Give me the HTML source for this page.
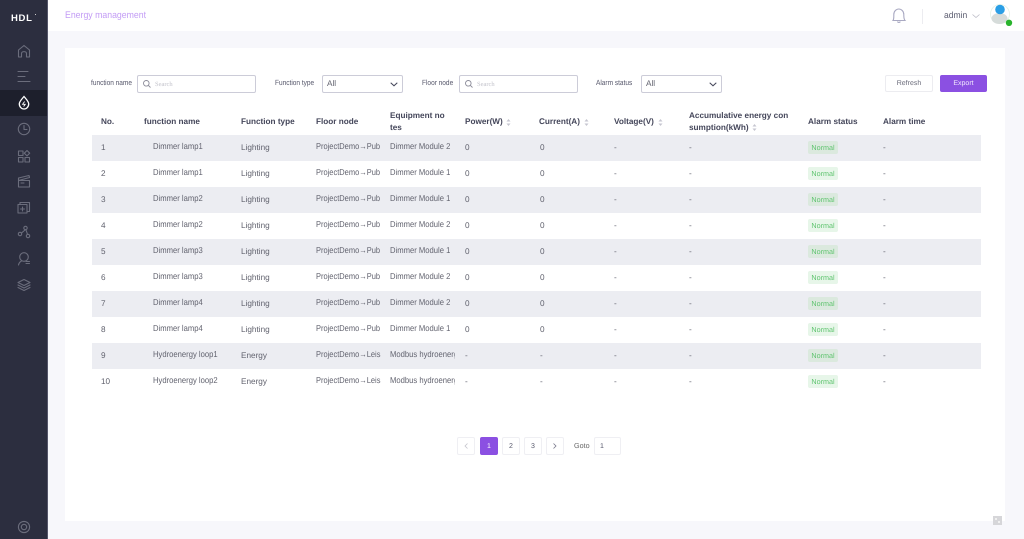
<!DOCTYPE html>
<html><head><meta charset="utf-8">
<style>
*{box-sizing:border-box}
html,body{margin:0;padding:0;width:1024px;height:539px;overflow:hidden;background:#f7f7fb;font-family:"Liberation Sans",sans-serif;color:#55566a;text-rendering:geometricPrecision}
div,span{position:absolute;white-space:nowrap}
#side{left:0;top:0;width:48px;height:539px;background:#2c2e3f;border-right:1px solid #55566a}
#top{left:48px;top:0;width:976px;height:31px;background:#fff}
#main{left:65px;top:48px;width:940px;height:473px;background:#fff}
.lab{font-size:7.5px;color:#55566a;line-height:10px;transform:scaleX(.87);transform-origin:left}
.inp{height:18px;background:#fff;border:1px solid #ccccd8;border-radius:2px}
.ph{font:6.5px "Liberation Serif",serif;color:#c4c4cc;top:5px}
.th{font-size:8.2px;font-weight:bold;color:#44465a;line-height:11.5px}
.row{left:92px;width:889px;height:26px}
.row.s{background:#ecedf2;height:25.5px}
.row span{font-size:8.2px;color:#62636f;line-height:10px}
.n{left:9px;top:8px}.row .f{left:61px;top:6px;font-size:8.5px;transform:scaleX(.9);transform-origin:left}.t{left:149px;top:8px}.row .p{left:224px;top:6px;font-size:8.5px;transform:scaleX(.88);transform-origin:left}
.row .e{left:298px;top:6px;width:72px;overflow:hidden;font-size:8.5px;transform:scaleX(.9);transform-origin:left}.w{left:373px;top:8px}.c{left:448px;top:8px}.v{left:522px;top:8px}.a{left:597px;top:8px}.z{left:791px;top:8px}
.row .b{left:716px;top:6px;width:30px;height:13px;line-height:13px;text-align:center;font-size:7.2px;color:#5fc46f;background:#e7f6e9;border-radius:2px}
.row.s .b{background:#dbe9de}
.pg{top:437px;width:18px;height:18px;border:1px solid #efeff3;background:#fff;border-radius:2px;text-align:center;font-size:7px;line-height:17px;color:#55566a}
svg{position:absolute;overflow:visible}
.ic{fill:none;stroke:#6b6d7c;stroke-width:1.1;stroke-linecap:round;stroke-linejoin:round}
</style></head><body>
<div id="side">
<div style="left:11px;top:13px;font-size:9.5px;font-weight:bold;color:#fff;letter-spacing:.7px;line-height:11px">HDL</div>
<div style="left:35px;top:14px;width:1px;height:1px;background:#ccc"></div>
<div style="left:0;top:90px;width:47px;height:26px;background:#1d1f2c"></div>
<svg width="47" height="539" style="left:0;top:0">
<g class="ic">
<path d="M18.5 57V50L24 45.5 29.5 50V57H26.5V53.5C26.5 51 21.5 51 21.5 53.5V57Z"/>
<path d="M18 71.5H28M18 76.5H25M18 81.5H30"/>
<circle cx="24" cy="129" r="5.7"/><path d="M24 125.5V129.5H27"/>
<rect x="18.5" y="151" width="4.5" height="4.5"/><path d="M27 150.5l2.7 2.7-2.7 2.7-2.7-2.7z"/><rect x="18.5" y="157.5" width="4.5" height="4.5"/><rect x="25" y="157.5" width="4.5" height="4.5"/>
<path d="M18.5 180.5H29.5V187H18.5ZM18.5 180.5V178L29 175.5 29.5 177.5 18.5 180.5M21 183H24"/>
<path d="M20 204V202.5H29.5V211.5H27M18 204.5H27V213H18ZM22.5 207V211M20.5 209H24.5"/>
<circle cx="25.5" cy="228" r="1.7"/><circle cx="20" cy="234" r="1.7"/><circle cx="28" cy="236" r="1.7"/><path d="M25 230L21.5 233M26 230L27.5 234.3"/>
<circle cx="24" cy="257" r="4.3"/><path d="M18.5 265C19 262.5 20.5 261.5 21.5 261"/><path d="M26 261.5H29.5M26 263.5H29.5"/>
<path d="M24 279.5L30 282.5 24 285.5 18 282.5ZM18 285L24 288 30 285M18 287.5L24 290.5 30 287.5"/>
<circle cx="24" cy="527" r="5.6"/><circle cx="24" cy="527" r="2.7"/>
</g>
<path d="M24 96.5C21.5 99.5 19.3 101.5 19.3 104C19.3 106.8 21.5 109 24 109C26.5 109 28.7 106.8 28.7 104C28.7 101.5 26.5 99.5 24 96.5Z" fill="none" stroke="#fff" stroke-width="1.3"/>
<path d="M24.6 101.5L22.6 104.3H25.2L23.6 106.5" fill="none" stroke="#fff" stroke-width=".9"/>
</svg>
</div>
<div id="top"></div>
<div style="left:65px;top:10px;font-size:9.6px;line-height:12px;color:#c39cf5;transform:scaleX(.91);transform-origin:left">Energy management</div>
<svg width="20" height="20" style="left:889px;top:6px" fill="none" stroke="#a9a9c2" stroke-width="1.1"><path d="M4 14.5C5 13 4.8 11 4.8 8.5C4.8 5.5 7 3 9.8 3C12.6 3 14.8 5.5 14.8 8.5C14.8 11 14.7 13 16 14.5ZM8.5 15.5C8.8 16.7 11 16.7 11.2 15.500"/></svg>
<div style="left:922px;top:9px;width:1px;height:15px;background:#ececf0"></div>
<div style="left:944px;top:10px;font-size:9px;line-height:11px;color:#5c5d70;transform:scaleX(.95);transform-origin:left">admin</div>
<svg width="8" height="5" style="left:972px;top:14px" fill="none" stroke="#bbbbc6" stroke-width=".8"><path d="M.5.5L4 3.500 7.500.5"/></svg>
<svg width="26" height="26" style="left:989px;top:4px"><circle cx="11" cy="10" r="9.500" fill="none" stroke="#e3f1e6" stroke-width=".8"/><ellipse cx="10.500" cy="14.500" rx="8" ry="5.500" fill="#d6dcda"/><circle cx="11" cy="5.500" r="4.800" fill="#2a9ee5"/><circle cx="20" cy="18.800" r="3.200" fill="#28b32c"/></svg>

<div id="main"></div>
<div class="lab" style="left:91px;top:78px">function name</div>
<div class="inp" style="left:137px;top:75px;width:119px"><svg width="8" height="8" style="left:5px;top:4px" fill="none" stroke="#8a8a98" stroke-width=".9"><circle cx="3.300" cy="3.300" r="2.800"/><path d="M5.400 5.400L7.500 7.500"/></svg><span class="ph" style="left:17px">Search</span></div>
<div class="lab" style="left:275px;top:78px">Function type</div>
<div class="inp" style="left:322px;top:75px;width:81px"><span style="left:4px;top:2px;font-size:8.200px;line-height:11px;color:#62636f">All</span><svg width="8" height="5" style="left:67px;top:6px" fill="none" stroke="#44465a" stroke-width="1"><path d="M.7.7L4 3.800 7.300.7"/></svg></div>
<div class="lab" style="left:422px;top:78px">Floor node</div>
<div class="inp" style="left:459px;top:75px;width:119px"><svg width="8" height="8" style="left:5px;top:4px" fill="none" stroke="#8a8a98" stroke-width=".9"><circle cx="3.300" cy="3.300" r="2.800"/><path d="M5.400 5.400L7.500 7.500"/></svg><span class="ph" style="left:17px">Search</span></div>
<div class="lab" style="left:596px;top:78px">Alarm status</div>
<div class="inp" style="left:641px;top:75px;width:81px"><span style="left:4px;top:2px;font-size:8.200px;line-height:11px;color:#62636f">All</span><svg width="8" height="5" style="left:67px;top:6px" fill="none" stroke="#44465a" stroke-width="1"><path d="M.7.7L4 3.800 7.300.7"/></svg></div>
<div style="left:885px;top:75px;width:48px;height:17px;border:1px solid #ececf0;border-radius:2px;background:#fff;text-align:center;font-size:7px;line-height:16px;color:#6a6b7a">Refresh</div>
<div style="left:940px;top:75px;width:47px;height:17px;border-radius:2px;background:#8b50e2;text-align:center;font-size:7px;line-height:18px;color:#f1e8fd">Export</div>

<div class="th" style="left:101px;top:116px">No.</div>
<div class="th" style="left:144px;top:116px">function name</div>
<div class="th" style="left:241px;top:116px">Function type</div>
<div class="th" style="left:316px;top:116px">Floor node</div>
<div class="th" style="left:390px;top:110px">Equipment no<br>tes</div>
<div class="th" style="left:465px;top:116px">Power(W)</div>
<svg width="5" height="7" style="left:506px;top:119px" fill="#c6c6d0"><path d="M2.500 0L4.500 2.500H.5ZM2.500 7L4.500 4.500H.5Z"/></svg>
<div class="th" style="left:539px;top:116px">Current(A)</div>
<svg width="5" height="7" style="left:584px;top:119px" fill="#c6c6d0"><path d="M2.500 0L4.500 2.500H.5ZM2.500 7L4.500 4.500H.5Z"/></svg>
<div class="th" style="left:614px;top:116px">Voltage(V)</div>
<svg width="5" height="7" style="left:658px;top:119px" fill="#c6c6d0"><path d="M2.500 0L4.500 2.500H.5ZM2.500 7L4.500 4.500H.5Z"/></svg>
<div class="th" style="left:689px;top:110px">Accumulative energy con<br>sumption(kWh)</div>
<svg width="5" height="7" style="left:752px;top:124px" fill="#c6c6d0"><path d="M2.500 0L4.500 2.500H.5ZM2.500 7L4.500 4.500H.5Z"/></svg>
<div class="th" style="left:808px;top:116px">Alarm status</div>
<div class="th" style="left:883px;top:116px">Alarm time</div>

<div class="row s" style="top:135px"><span class="n">1</span><span class="f">Dimmer lamp1</span><span class="t">Lighting</span><span class="p">ProjectDemo→Pub</span><span class="e">Dimmer Module 2</span><span class="w">0</span><span class="c">0</span><span class="v">-</span><span class="a">-</span><span class="b">Normal</span><span class="z">-</span></div>
<div class="row" style="top:161px"><span class="n">2</span><span class="f">Dimmer lamp1</span><span class="t">Lighting</span><span class="p">ProjectDemo→Pub</span><span class="e">Dimmer Module 1</span><span class="w">0</span><span class="c">0</span><span class="v">-</span><span class="a">-</span><span class="b">Normal</span><span class="z">-</span></div>
<div class="row s" style="top:187px"><span class="n">3</span><span class="f">Dimmer lamp2</span><span class="t">Lighting</span><span class="p">ProjectDemo→Pub</span><span class="e">Dimmer Module 1</span><span class="w">0</span><span class="c">0</span><span class="v">-</span><span class="a">-</span><span class="b">Normal</span><span class="z">-</span></div>
<div class="row" style="top:213px"><span class="n">4</span><span class="f">Dimmer lamp2</span><span class="t">Lighting</span><span class="p">ProjectDemo→Pub</span><span class="e">Dimmer Module 2</span><span class="w">0</span><span class="c">0</span><span class="v">-</span><span class="a">-</span><span class="b">Normal</span><span class="z">-</span></div>
<div class="row s" style="top:239px"><span class="n">5</span><span class="f">Dimmer lamp3</span><span class="t">Lighting</span><span class="p">ProjectDemo→Pub</span><span class="e">Dimmer Module 1</span><span class="w">0</span><span class="c">0</span><span class="v">-</span><span class="a">-</span><span class="b">Normal</span><span class="z">-</span></div>
<div class="row" style="top:265px"><span class="n">6</span><span class="f">Dimmer lamp3</span><span class="t">Lighting</span><span class="p">ProjectDemo→Pub</span><span class="e">Dimmer Module 2</span><span class="w">0</span><span class="c">0</span><span class="v">-</span><span class="a">-</span><span class="b">Normal</span><span class="z">-</span></div>
<div class="row s" style="top:291px"><span class="n">7</span><span class="f">Dimmer lamp4</span><span class="t">Lighting</span><span class="p">ProjectDemo→Pub</span><span class="e">Dimmer Module 2</span><span class="w">0</span><span class="c">0</span><span class="v">-</span><span class="a">-</span><span class="b">Normal</span><span class="z">-</span></div>
<div class="row" style="top:317px"><span class="n">8</span><span class="f">Dimmer lamp4</span><span class="t">Lighting</span><span class="p">ProjectDemo→Pub</span><span class="e">Dimmer Module 1</span><span class="w">0</span><span class="c">0</span><span class="v">-</span><span class="a">-</span><span class="b">Normal</span><span class="z">-</span></div>
<div class="row s" style="top:343px"><span class="n">9</span><span class="f">Hydroenergy loop1</span><span class="t">Energy</span><span class="p">ProjectDemo→Leis</span><span class="e">Modbus hydroenergy</span><span class="w">-</span><span class="c">-</span><span class="v">-</span><span class="a">-</span><span class="b">Normal</span><span class="z">-</span></div>
<div class="row" style="top:369px"><span class="n">10</span><span class="f">Hydroenergy loop2</span><span class="t">Energy</span><span class="p">ProjectDemo→Leis</span><span class="e">Modbus hydroenergy</span><span class="w">-</span><span class="c">-</span><span class="v">-</span><span class="a">-</span><span class="b">Normal</span><span class="z">-</span></div>

<div class="pg" style="left:457px"><svg width="4" height="6" style="left:6px;top:5px" fill="none" stroke="#c4c4cc" stroke-width=".8"><path d="M3.500.5L1 3l2.500 2.500"/></svg></div>
<div class="pg" style="left:480px;background:#8b50e2;border-color:#8b50e2;color:#fff">1</div>
<div class="pg" style="left:502px">2</div>
<div class="pg" style="left:524px">3</div>
<div class="pg" style="left:546px"><svg width="4" height="6" style="left:6px;top:5px" fill="none" stroke="#77788a" stroke-width=".8"><path d="M.5.5L3 3 .5 5.500"/></svg></div>
<div style="left:574px;top:441px;font-size:7.2px;line-height:10px;color:#666">Goto</div>
<div class="pg" style="left:594px;width:27px;text-align:left;padding-left:5px;line-height:18px">1</div>
<div style="left:993px;top:516px;width:9px;height:9px;background:#d6d6d9"></div>
<div style="left:995px;top:518px;width:2px;height:2px;background:#f0f0f0"></div>
<div style="left:998px;top:521px;width:2px;height:2px;background:#f0f0f0"></div>
</body></html>
